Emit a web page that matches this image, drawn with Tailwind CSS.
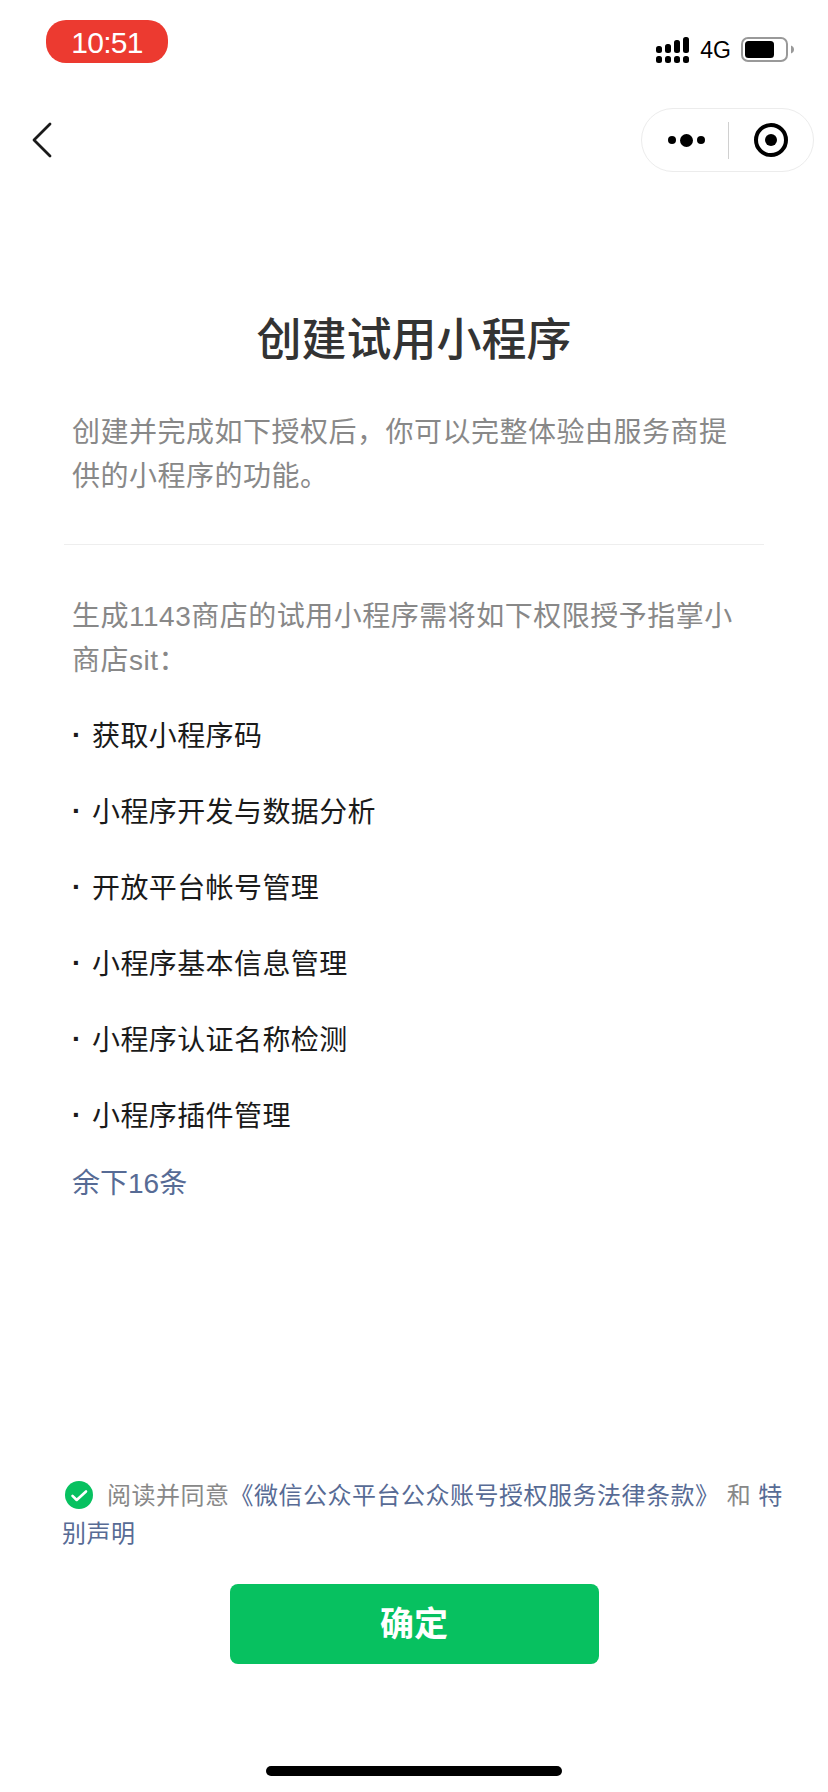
<!DOCTYPE html>
<html lang="zh-CN">
<head>
<meta charset="utf-8">
<script src="https://cdn.jsdelivr.net/npm/@tailwindcss/browser@4"></script>
</head>
<body class="bg-white">
<div class="w-[828px] h-[1792px] flex flex-col overflow-hidden font-['Liberation_Sans','Noto_Sans_CJK_SC',sans-serif]">
  <div class="h-[108px] pt-[20px] pl-[46px] pr-[33px] flex justify-between items-start">
    <div class="w-[122px] h-[43px] rounded-[20px] bg-[#ec3a30] text-white text-[30px] tracking-[-0.7px] leading-[45px] text-center">10:51</div>
    <div class="flex items-center h-[26px] mt-[17px] gap-[10px]">
      <svg width="34" height="26" viewBox="0 0 34 26" fill="#000">
        <rect x="0" y="9" width="6" height="7" rx="2.500"/><rect x="9" y="7" width="6" height="9" rx="2.500"/><rect x="18" y="3" width="6" height="13" rx="2.500"/><rect x="27" y="0" width="6" height="16" rx="2.500"/>
        <rect x="0" y="19" width="6" height="7" rx="2.500"/><rect x="9" y="19" width="6" height="7" rx="2.500"/><rect x="18" y="19" width="6" height="7" rx="2.500"/><rect x="27" y="19" width="6" height="7" rx="2.500"/>
      </svg>
      <span class="text-[23px] leading-[26px] text-black">4G</span>
      <svg width="54" height="26" viewBox="0 0 54 26">
        <rect x="1" y="1" width="45" height="23" rx="6" fill="none" stroke="#999" stroke-width="2"/>
        <rect x="4" y="4" width="29" height="17" rx="3.500" fill="#000"/>
        <path d="M50 8.500c2 .7 3 2.200 3 4s-1 3.300-3 4z" fill="#999"/>
      </svg>
    </div>
  </div>
  <div class="h-[64px] pl-[32px] pr-[14px] flex justify-between items-center">
    <svg width="20" height="36" viewBox="0 0 20 36" fill="none" stroke="#1a1a1a" stroke-width="2.800" stroke-linecap="round" stroke-linejoin="round"><path d="M18 2 2 18l16 16"/></svg>
    <div class="w-[173px] h-[64px] rounded-full border border-[#ececec] flex items-center">
      <div class="w-[86px] flex justify-center items-center gap-[4px] pl-[2px]">
        <span class="w-[8px] h-[8px] rounded-full bg-black"></span>
        <span class="w-[13px] h-[13px] rounded-full bg-black"></span>
        <span class="w-[8px] h-[8px] rounded-full bg-black"></span>
      </div>
      <div class="w-px h-[37px] bg-[#d0d0d0]"></div>
      <div class="flex-1 flex justify-center items-center">
        <div class="w-[34px] h-[34px] rounded-full border-[4px] border-black flex items-center justify-center">
          <div class="w-[12px] h-[12px] rounded-full bg-black"></div>
        </div>
      </div>
    </div>
  </div>
  <h1 class="mt-[139px] text-center text-[45px] leading-[60px] font-medium text-[#333333]">创建试用小程序</h1>
  <p class="mt-[40px] ml-[72px] mr-[92px] text-[28px] leading-[44px] tracking-[0.5px] text-[#888888]">创建并完成如下授权后&#xFF0C;你可以完整体验由服务商提供的小程序的功能。</p>
  <div class="mt-[45px] mx-[64px] h-px bg-[#eeeeee]"></div>
  <p class="mt-[50px] mx-[72px] text-[28px] leading-[44px] tracking-[0.5px] text-[#888888]">生成1143商店的试用小程序需将如下权限授予指掌小商店sit&#xFF1A;</p>
  <ul class="mt-[32px] ml-[72px] flex flex-col gap-[32px] text-[28px] leading-[44px] tracking-[0.4px] text-[#1a1a1a]">
    <li class="flex"><span class="w-[20px] -translate-y-[2px] font-bold">·</span>获取小程序码</li>
    <li class="flex"><span class="w-[20px] -translate-y-[2px] font-bold">·</span>小程序开发与数据分析</li>
    <li class="flex"><span class="w-[20px] -translate-y-[2px] font-bold">·</span>开放平台帐号管理</li>
    <li class="flex"><span class="w-[20px] -translate-y-[2px] font-bold">·</span>小程序基本信息管理</li>
    <li class="flex"><span class="w-[20px] -translate-y-[2px] font-bold">·</span>小程序认证名称检测</li>
    <li class="flex"><span class="w-[20px] -translate-y-[2px] font-bold">·</span>小程序插件管理</li>
  </ul>
  <div class="mt-[23px] ml-[72px] text-[28px] leading-[44px] text-[#576b95]">余下16条</div>
  <div class="mt-auto flex flex-col items-stretch">
    <p class="ml-[62px] mr-[40px] text-[24px] leading-[38px] tracking-[0.5px] text-[#888888]"><svg class="inline-block align-[-5px] ml-[3px] mr-[14px]" width="28" height="28" viewBox="0 0 28 28"><circle cx="14" cy="14" r="14" fill="#07c160"/><path d="M7.500 14.800l4.200 4.200L21 10.500" fill="none" stroke="#fff" stroke-width="2.600" stroke-linecap="round" stroke-linejoin="round"/></svg>阅读并同意<span class="text-[#576b95]">《微信公众平台公众账号授权服务法律条款》</span> 和 <span class="text-[#576b95]">特别声明</span></p>
    <button class="mt-[31px] mx-auto w-[369px] h-[80px] rounded-[8px] bg-[#07c160] text-white text-[34px] font-bold">确定</button>
    <div class="mt-[102px] mb-[16px] mx-auto w-[296px] h-[10px] rounded-full bg-black"></div>
  </div>
</div>
</body>
</html>
